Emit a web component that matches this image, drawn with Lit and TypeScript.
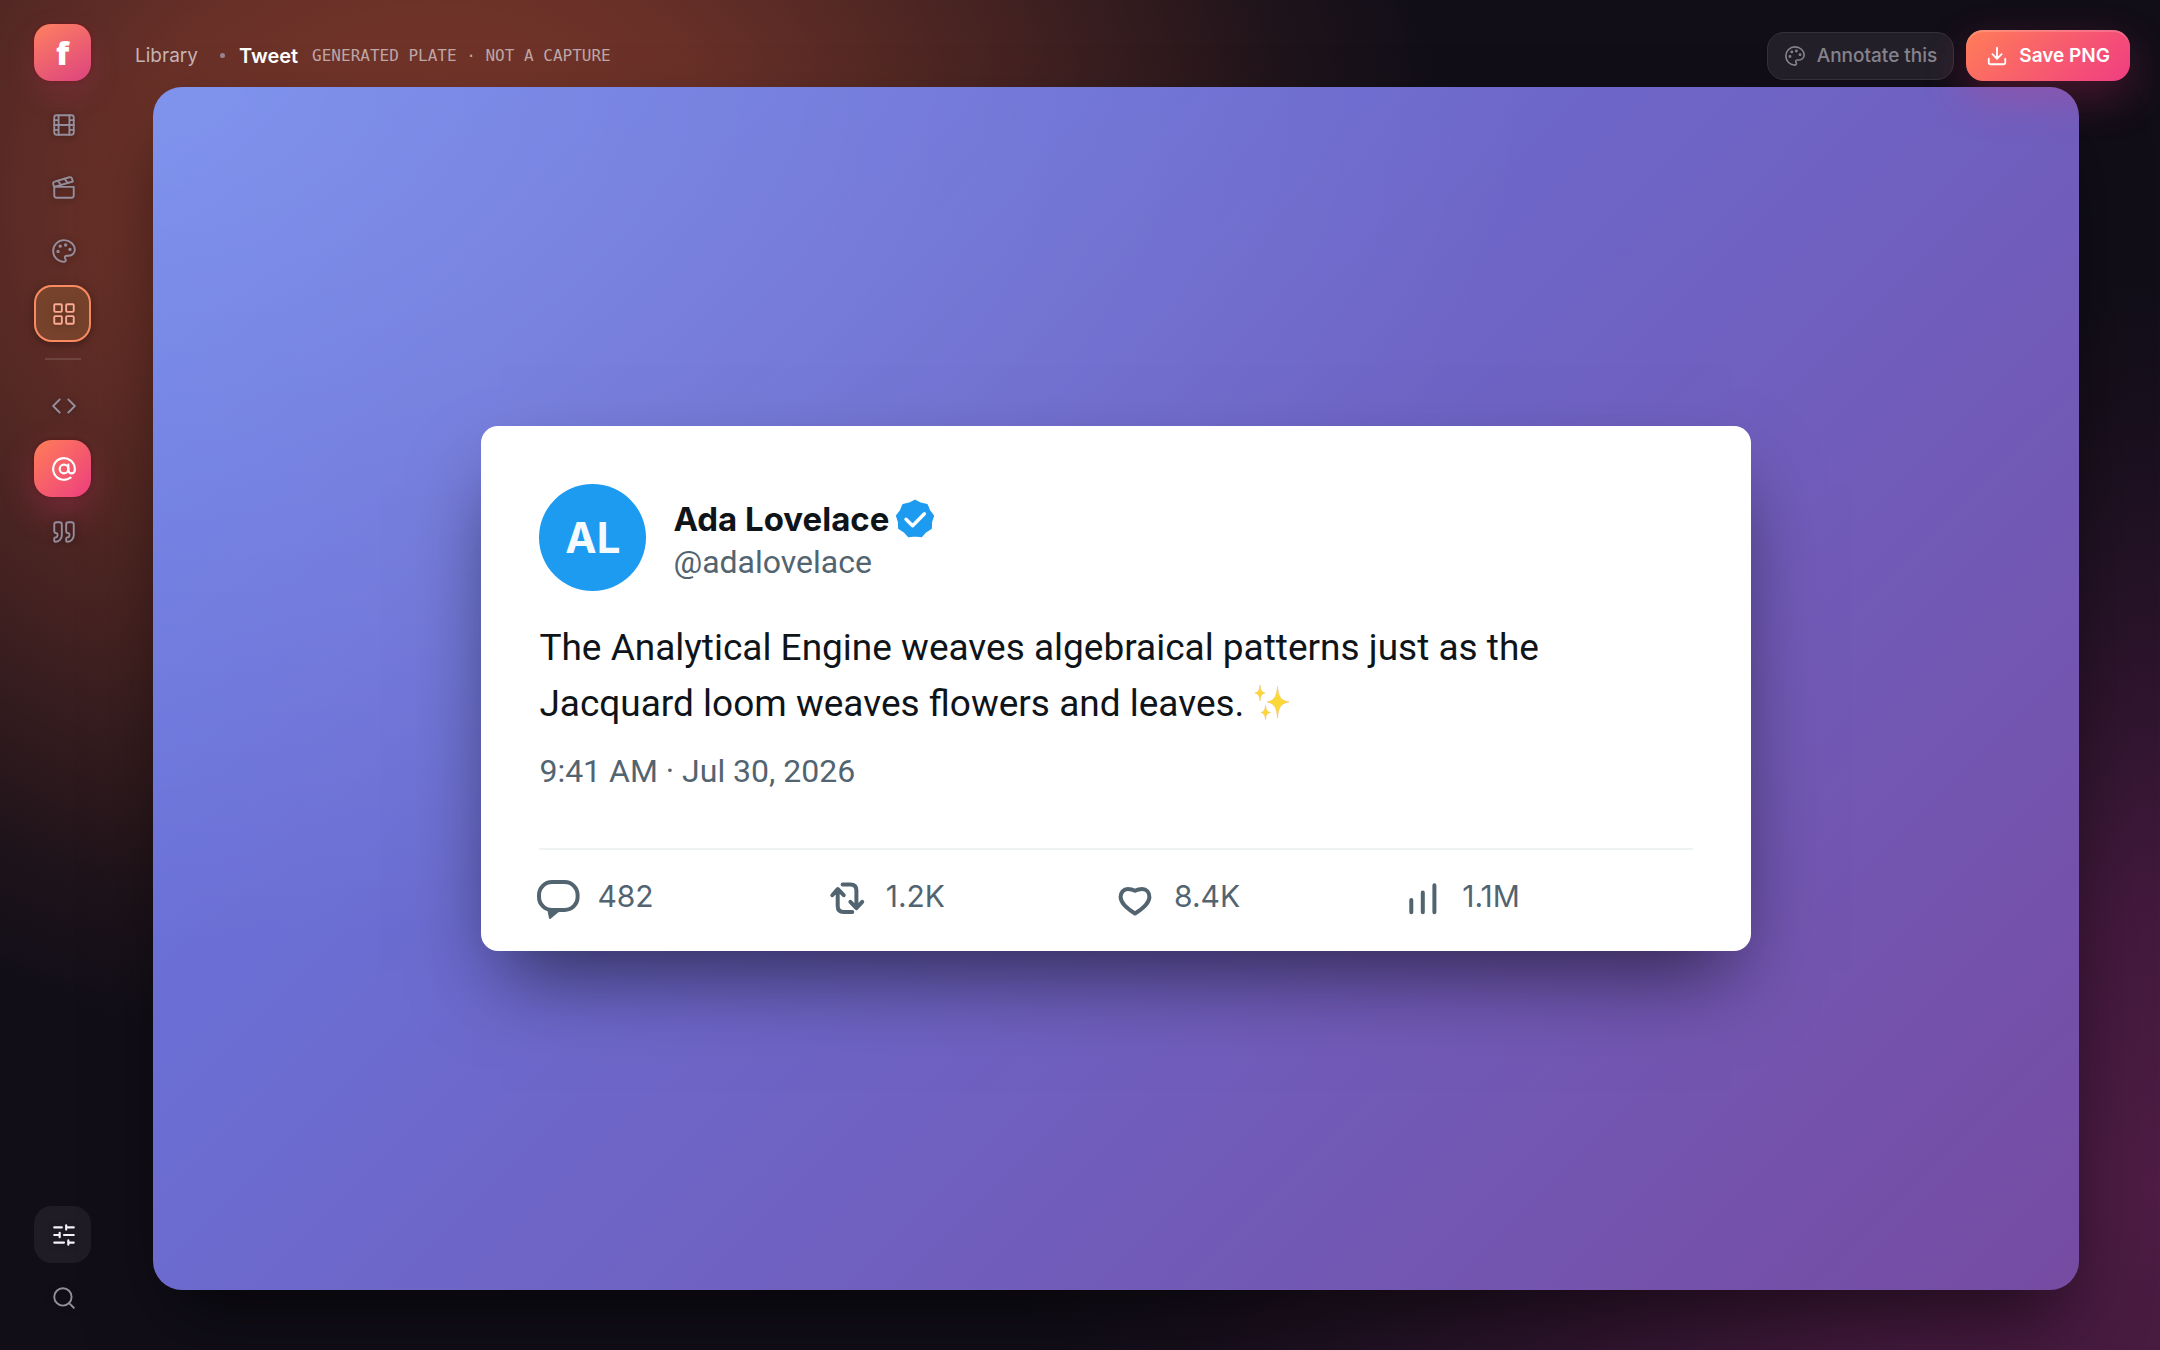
import { LitElement, html, css, svg } from "lit";
import { customElement, property } from "lit/decorators.js";
import { classMap } from "lit/directives/class-map.js";

const ICONS = {
  film: svg`<rect x="3" y="3" width="18" height="18" rx="2"/><path d="M7 3v18M3 7.5h4M3 12h18M3 16.5h4M17 3v18M17 7.5h4M17 16.5h4"/>`,
  clapper: svg`<path d="M20.2 6 3 11l-.9-2.4c-.3-1.1.3-2.2 1.3-2.5l13.5-4c1.1-.3 2.2.3 2.5 1.3Z"/><path d="m6.2 5.3 3.1 3.9M12.4 3.4l3.1 4"/><path d="M3 11h18v8a2 2 0 0 1-2 2H5a2 2 0 0 1-2-2Z"/>`,
  palette: svg`<path d="M12 2C6.5 2 2 6.5 2 12s4.5 10 10 10c.926 0 1.648-.746 1.648-1.688 0-.437-.18-.835-.437-1.125-.29-.289-.438-.652-.438-1.125a1.64 1.64 0 0 1 1.668-1.668h1.996c3.051 0 5.555-2.503 5.555-5.554C21.965 6.012 17.461 2 12 2z"/><circle cx="13.5" cy="6.5" r=".7"/><circle cx="17.5" cy="10.5" r=".7"/><circle cx="8.5" cy="7.5" r=".7"/><circle cx="6.5" cy="12.5" r=".7"/>`,
  grid: svg`<rect x="3" y="3" width="7" height="7" rx="1"/><rect x="14" y="3" width="7" height="7" rx="1"/><rect x="14" y="14" width="7" height="7" rx="1"/><rect x="3" y="14" width="7" height="7" rx="1"/>`,
  code: svg`<path d="m16 18 6-6-6-6M8 6l-6 6 6 6"/>`,
  at: svg`<circle cx="12" cy="12" r="4"/><path d="M16 8v5a3 3 0 0 0 6 0v-1a10 10 0 1 0-4 8"/>`,
  quote: svg`<path d="M16 3a2 2 0 0 0-2 2v6a2 2 0 0 0 2 2 1 1 0 0 1 1 1v1a2 2 0 0 1-2 2 1 1 0 0 0-1 1v2a1 1 0 0 0 1 1 6 6 0 0 0 6-6V5a2 2 0 0 0-2-2z"/><path d="M5 3a2 2 0 0 0-2 2v6a2 2 0 0 0 2 2 1 1 0 0 1 1 1v1a2 2 0 0 1-2 2 1 1 0 0 0-1 1v2a1 1 0 0 0 1 1 6 6 0 0 0 6-6V5a2 2 0 0 0-2-2z"/>`,
  sliders: svg`<path d="M10 5H3M12 19H3M14 3v4M16 17v4M21 12h-9M21 19h-5M21 5h-7M8 10v4M8 12H3"/>`,
  search: svg`<circle cx="11" cy="11" r="8"/><path d="m21 21-4.3-4.3"/>`,
  download: svg`<path d="M12 3v12M7 10l5 5 5-5M3 15v4a2 2 0 0 0 2 2h14a2 2 0 0 0 2-2v-4"/>`,
};

type IconName = keyof typeof ICONS;

const icon = (name: IconName) =>
  html`<svg class="icon" viewBox="0 0 24 24" aria-hidden="true">${ICONS[name]}</svg>`;

interface RailItem {
  icon: IconName;
  label: string;
  state?: "outlined" | "filled" | "raised";
}

const STUDIOS: RailItem[] = [
  { icon: "film", label: "Film" },
  { icon: "clapper", label: "Scenes" },
  { icon: "palette", label: "Annotate" },
  { icon: "grid", label: "Library", state: "outlined" },
];
const PLATES: RailItem[] = [
  { icon: "code", label: "Code" },
  { icon: "at", label: "Tweet", state: "filled" },
  { icon: "quote", label: "Quote" },
];
const TOOLS: RailItem[] = [
  { icon: "sliders", label: "Adjust", state: "raised" },
  { icon: "search", label: "Search" },
];

@customElement("app-rail")
class AppRail extends LitElement {
  static styles = css`
    :host {
      display: flex;
      flex-direction: column;
      align-items: center;
      gap: 6px;
      padding: 24px 0;
      box-sizing: border-box;
      font-family: Inter, "Liberation Sans", sans-serif;
    }
    .logo {
      display: grid;
      place-items: center;
      width: 57px;
      height: 57px;
      margin-bottom: 9px;
      border-radius: 17px;
      background: linear-gradient(150deg, #ff8160, #dc437f);
      box-shadow: 0 12px 30px rgba(200, 50, 120, 0.2), 0 0 4px rgba(120, 0, 0, 0.5);
      color: #fff;
      font: 800 32px/32px "Open Sans", Inter, sans-serif;
      text-decoration: none;
    }
    .item {
      display: grid;
      place-items: center;
      width: 57px;
      height: 57px;
      padding: 0 0 0 2px;
      border: 0;
      border-radius: 18px;
      background: none;
      color: #958d9b;
      cursor: pointer;
    }
    .icon {
      width: 26px;
      height: 26px;
      fill: none;
      stroke: currentColor;
      stroke-width: 1.75;
      stroke-linecap: round;
      stroke-linejoin: round;
      filter: drop-shadow(0 1px 3px rgba(0, 0, 0, 0.35));
    }
    .outlined {
      background: #77422b;
      color: #fda992;
      box-shadow: inset 0 0 0 2px #fa8a62, 0 2px 8px rgba(0, 0, 0, 0.35);
    }
    .filled {
      background: linear-gradient(135deg, #ff7d57, #ee3f80);
      color: #fff;
      box-shadow: 0 14px 34px rgba(236, 50, 120, 0.26), 0 0 4px rgba(60, 0, 0, 0.5);
    }
    .filled .icon {
      stroke-width: 2;
      filter: none;
    }
    .raised {
      background: #1f1c25;
      color: #f4f2f6;
    }
    .raised .icon {
      stroke-width: 2;
    }
    .rule {
      width: 36px;
      height: 2px;
      margin: 10px 0 11px;
      border: 0;
      background: rgba(255, 255, 255, 0.12);
    }
    .spacer {
      flex: 1;
    }
  `;

  private item(entry: RailItem) {
    const classes = { item: true, [entry.state ?? "plain"]: true };
    return html`<button class=${classMap(classes)} type="button" aria-label=${entry.label}>
      ${icon(entry.icon)}
    </button>`;
  }

  render() {
    return html`
      <a class="logo" href="#home">f</a>
      ${STUDIOS.map((entry) => this.item(entry))}
      <hr class="rule" />
      ${PLATES.map((entry) => this.item(entry))}
      <span class="spacer"></span>
      ${TOOLS.map((entry) => this.item(entry))}
    `;
  }
}

interface Stat {
  label: string;
  value: string;
  shape: unknown;
}

const STATS: Stat[] = [
  {
    label: "Replies",
    value: "482",
    shape: svg`<rect x="0" y="5" width="38.6" height="28" rx="13"/><path class="solid" d="M9.5 33.5 11 41l9-7.5z"/>`,
  },
  {
    label: "Reposts",
    value: "1.2K",
    shape: svg`<path d="M4.3 18.2 9.7 12l6 6.2M9.7 12.5V29q0 6 6 6h8.6M14.6 7.6h7.8q6 0 6 6V31M22.4 24.8l6 6.4 5.8-6.4"/>`,
  },
  {
    label: "Likes",
    value: "8.4K",
    shape: svg`<path d="M19 13.8C16.4 12.4 14 12 11.8 12 7.5 12 4.6 15.5 4.6 20c0 6.2 6.2 11.4 14.4 16.5C27.2 31.4 33.4 26.2 33.4 20c0-4.5-2.9-8-7.200-8-2.200 0-4.600.4-7.200 1.800Z"/>`,
  },
  {
    label: "Views",
    value: "1.1M",
    shape: svg`<path d="M7.3 23v12.3M18.8 15.5v19.800M30.4 8.2v27.100"/>`,
  },
];

/* Nine-pointed rosette around (20,20). */
const ROSETTE = Array.from({ length: 18 }, (_, i) => {
  const radius = i % 2 ? 16.6 : 18.6;
  const angle = (i * Math.PI) / 9;
  return `${(20 + radius * Math.sin(angle)).toFixed(1)},${(20 - radius * Math.cos(angle)).toFixed(1)}`;
}).join(" ");

@customElement("tweet-card")
class TweetCard extends LitElement {
  @property() name = "";
  @property() handle = "";
  @property() initials = "";
  @property() stamp = "";

  static styles = css`
    :host {
      display: block;
      box-sizing: border-box;
      padding: 58px 58px 35px;
      border-radius: 17px;
      background: #fff;
      color: #0f1419;
      font-family: Inter, "Liberation Sans", sans-serif;
      box-shadow: 0 40px 80px -20px rgba(0, 0, 0, 0.6);
    }
    .author {
      display: flex;
      align-items: center;
      gap: 27px;
    }
    .avatar {
      display: grid;
      place-items: center;
      width: 107px;
      height: 107px;
      border-radius: 50%;
      background: #1d9bf0;
      color: #f5faff;
      font-size: 42px;
      font-weight: 700;
    }
    .who {
      display: flex;
      flex-direction: column;
      padding-top: 4px;
    }
    .name {
      display: flex;
      align-items: center;
      gap: 6px;
      margin: 0;
      font-size: 33px;
      line-height: 44px;
      font-weight: 700;
    }
    .badge {
      width: 40px;
      height: 40px;
      fill: #1d9bf0;
    }
    .tick {
      fill: none;
      stroke: #fff;
      stroke-width: 3.4;
      stroke-linecap: round;
      stroke-linejoin: round;
    }
    .handle,
    .stamp {
      color: #536471;
      font-family: Roboto, Inter, sans-serif;
      font-size: 32px;
      line-height: 42px;
    }
    .body {
      max-width: 1060px;
      margin: 29px 0 0;
      font-family: Roboto, Inter, sans-serif;
      font-size: 37px;
      line-height: 56px;
    }
    .spark {
      width: 36px;
      height: 36px;
      vertical-align: -4px;
      fill: #fdd835;
      stroke: #f4b95a;
      stroke-width: 0.5;
    }
    .stamp {
      display: block;
      margin-top: 18px;
    }
    .stats {
      display: grid;
      grid-template-columns: repeat(4, 1fr);
      margin: 56px 0 0;
      padding: 26px 0 0;
      border-top: 2px solid #eff3f4;
      color: #536471;
      list-style: none;
    }
    .stat {
      display: flex;
      align-items: center;
      gap: 20px;
      font-size: 30px;
      line-height: 40px;
    }
    .glyph {
      width: 38px;
      height: 38px;
      overflow: visible;
      fill: none;
      stroke: currentColor;
      stroke-width: 4;
      stroke-linecap: round;
      stroke-linejoin: round;
    }
    .solid {
      fill: currentColor;
      stroke-width: 2;
    }
  `;

  render() {
    return html`
      <header class="author">
        <span class="avatar">${this.initials}</span>
        <div class="who">
          <h1 class="name">
            ${this.name}
            <svg class="badge" viewBox="0 0 40 40" role="img" aria-label="Verified">
              <polygon points=${ROSETTE} stroke="#1d9bf0" stroke-width="1.6" stroke-linejoin="round" />
              <path class="tick" d="M11 20.300 17.600 26.800 29.400 14.800" />
            </svg>
          </h1>
          <span class="handle">${this.handle}</span>
        </div>
      </header>
      <p class="body">
        The Analytical Engine weaves algebraical patterns just as the Jacquard loom weaves flowers and leaves.
        <svg class="spark" viewBox="0 0 36 36" role="img" aria-label="sparkles">
          <path d="M23.500 2.500C24.500 12 26 16.500 35 18 26 19.500 24.500 24 23.500 34 22.500 24 21 19.500 13 18 21 16.500 22.500 12 23.500 2.500Z" />
          <path d="M6 1C6.600 6 7.400 8 11 9 7.400 10 6.600 12 6 17 5.400 12 4.600 10 1 9 4.600 8 5.400 6 6 1Z" />
          <path d="M11.500 21.500C12.100 26 13 27.600 16.500 28.500 13 29.400 12.100 31 11.500 35.500 10.900 31 10 29.400 7 28.500 10 27.600 10.900 26 11.500 21.500Z" />
        </svg>
      </p>
      <time class="stamp">${this.stamp}</time>
      <ul class="stats">
        ${STATS.map(
          (stat) => html`<li class="stat">
            <svg class="glyph" viewBox="0 0 38 38" role="img" aria-label=${stat.label}>${stat.shape}</svg>
            <span>${stat.value}</span>
          </li>`
        )}
      </ul>
    `;
  }
}

@customElement("app-root")
class AppRoot extends LitElement {
  static styles = css`
    :host {
      display: grid;
      grid-template-columns: 125px 1fr;
      min-height: 100vh;
      overflow: hidden;
      font-family: Inter, "Liberation Sans", sans-serif;
      background:
        radial-gradient(
          1020px 860px at 20% 15%,
          rgba(255, 107, 66, 0.44),
          rgba(255, 107, 66, 0.37) 30%,
          rgba(255, 107, 66, 0.21) 60%,
          rgba(255, 107, 66, 0.06) 85%,
          rgba(255, 107, 66, 0)
        ),
        radial-gradient(
          1150px 920px at 100% 88%,
          rgba(215, 60, 170, 0.31),
          rgba(215, 60, 170, 0.25) 30%,
          rgba(215, 60, 170, 0.12) 60%,
          rgba(215, 60, 170, 0.03) 85%,
          rgba(215, 60, 170, 0)
        ),
        #110e18;
    }
    .workspace {
      display: flex;
      flex-direction: column;
      min-width: 0;
    }
    .bar {
      position: relative;
      z-index: 1;
      display: flex;
      align-items: center;
      gap: 12px;
      padding: 30px 30px 6px 10px;
    }
    .crumbs {
      display: flex;
      align-items: center;
      gap: 14px;
      flex: 1;
      font-size: 19px;
      line-height: 24px;
    }
    .parent {
      color: #c5b3b3;
      text-decoration: none;
    }
    .dot {
      width: 5px;
      height: 5px;
      margin: 0 0 0 8px;
      border-radius: 50%;
      background: #968491;
    }
    .current {
      color: #fff;
      font-size: 20px;
      font-weight: 600;
    }
    .note {
      color: #bda6a6;
      font: 16px/24px "DejaVu Sans Mono", monospace;
      text-transform: uppercase;
    }
    .btn {
      display: flex;
      align-items: center;
      gap: 11px;
      border: 0;
      border-radius: 17px;
      font: 600 19px/24px Inter, "Liberation Sans", sans-serif;
      cursor: pointer;
    }
    .quiet {
      padding: 11px 16px;
      border: 1px solid #34313b;
      background: #221f29;
      color: #86838d;
      font-weight: 500;
    }
    .save {
      padding: 14px 20px 13px;
      background: linear-gradient(135deg, #ff7d58, #f03d82);
      box-shadow: 0 16px 44px rgba(240, 50, 110, 0.26), inset 0 2px 1px rgba(255, 255, 255, 0.18);
      color: #fff;
    }
    .icon {
      width: 22px;
      height: 22px;
      fill: none;
      stroke: currentColor;
      stroke-width: 1.75;
      stroke-linecap: round;
      stroke-linejoin: round;
    }
    .save .icon {
      stroke-width: 2;
    }
    .stage {
      display: grid;
      place-items: center;
      flex: 1;
      margin: 0 81px 60px 28px;
      border-radius: 29px;
      background:
        radial-gradient(120% 120% at 0 0, rgba(255, 255, 255, 0.17), rgba(255, 255, 255, 0) 60%),
        linear-gradient(135deg, #667eea, #764ba2);
      box-shadow: 0 36px 80px -16px rgba(0, 0, 0, 0.6);
    }
    .plate {
      width: 65.9%;
    }
  `;

  render() {
    return html`
      <app-rail></app-rail>
      <main class="workspace">
        <header class="bar">
          <nav class="crumbs">
            <a class="parent" href="#library">Library</a>
            <span class="dot"></span>
            <span class="current">Tweet</span>
            <span class="note">Generated plate · not a capture</span>
          </nav>
          <button class="btn quiet" type="button">${icon("palette")}Annotate this</button>
          <button class="btn save" type="button">${icon("download")}Save PNG</button>
        </header>
        <section class="stage">
          <tweet-card
            class="plate"
            name="Ada Lovelace"
            handle="@adalovelace"
            initials="AL"
            stamp="9:41 AM · Jul 30, 2026"
          ></tweet-card>
        </section>
      </main>
    `;
  }
}
